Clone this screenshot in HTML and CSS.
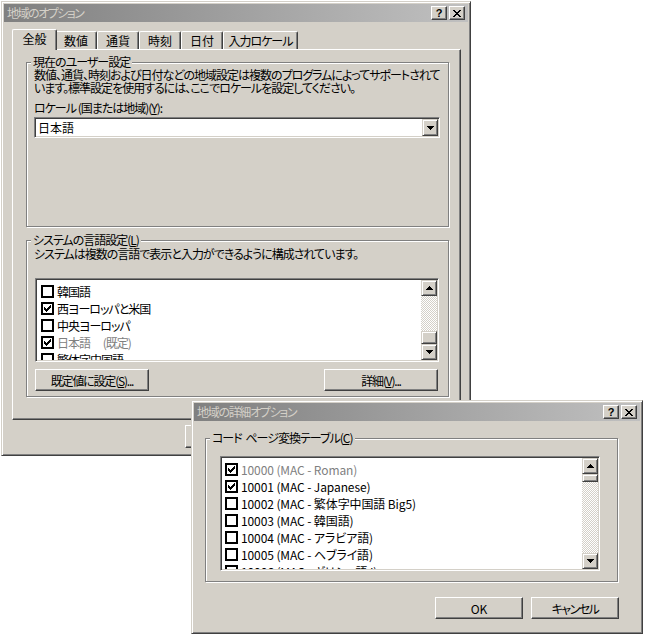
FILE: index.html
```html
<!DOCTYPE html>
<html lang="ja">
<head>
<meta charset="utf-8">
<title>地域のオプション</title>
<link rel="stylesheet" href="styles.css">
</head>
<body>
<div class="desktop">

  <div class="window win-main">
    <div class="titlebar">
      <span class="title">地域のオプション</span>
      <span class="tb-btn help">?</span>
      <span class="tb-btn close"><svg width="8" height="7" viewBox="0 0 8 7" shape-rendering="crispEdges"><path d="M0 0h2v1H0zM6 0h2v1H6zM1 1h2v1H1zM5 1h2v1H5zM2 2h4v1H2zM3 3h2v1H3zM2 4h4v1H2zM1 5h2v1H1zM5 5h2v1H5zM0 6h2v1H0zM6 6h2v1H6z"/></svg></span>
    </div>
    <div class="main-body">
      <div class="tabs">
        <div class="tab tab-first selected">全般</div>
        <div class="tab">数値</div>
        <div class="tab">通貨</div>
        <div class="tab">時刻</div>
        <div class="tab">日付</div>
        <div class="tab tab-wide">入力ロケール</div>
      </div>
      <div class="tabpanel">
        <div class="group group-user">
          <div class="group-label">現在のユーザー設定</div>
          <div class="desc">数値、通貨、時刻および日付などの地域設定は複数のプログラムによってサポートされて<br>います。標準設定を使用するには、ここでロケールを設定してください。</div>
          <div class="field-label">ロケール (国または地域)(<u>Y</u>):</div>
          <div class="combo">
            <span class="combo-text">日本語</span>
            <span class="sb-btn"><svg width="7" height="4" viewBox="0 0 7 4" shape-rendering="crispEdges"><path d="M0 0h7v1H0zM1 1h5v1H1zM2 2h3v1H2zM3 3h1v1H3z"/></svg></span>
          </div>
        </div>
        <div class="group group-lang">
          <div class="group-label">システムの言語設定(<u>L</u>)</div>
          <div class="desc desc2">システムは複数の言語で表示と入力ができるように構成されています。</div>
          <div class="listbox list-lang">
            <div class="list-items">
              <div class="item"><span class="check"></span><span>韓国語</span></div>
              <div class="item"><span class="check checked"><svg width="7" height="7" viewBox="0 0 7 7" shape-rendering="crispEdges"><path d="M6 0h1v1H6zM5 1h2v1H5zM0 2h1v1H0zM4 2h3v1H4zM0 3h2v1H0zM3 3h3v1H3zM0 4h5v1H0zM1 5h3v1H1zM2 6h1v1H2z"/></svg></span><span>西ヨーロッパと米国</span></div>
              <div class="item"><span class="check"></span><span>中央ヨーロッパ</span></div>
              <div class="item disabled"><span class="check checked"><svg width="7" height="7" viewBox="0 0 7 7" shape-rendering="crispEdges"><path d="M6 0h1v1H6zM5 1h2v1H5zM0 2h1v1H0zM4 2h3v1H4zM0 3h2v1H0zM3 3h3v1H3zM0 4h5v1H0zM1 5h3v1H1zM2 6h1v1H2z"/></svg></span><span>日本語　 (既定)</span></div>
              <div class="item"><span class="check"></span><span>繁体字中国語</span></div>
            </div>
            <div class="scrollbar">
              <span class="sb-btn"><svg width="7" height="4" viewBox="0 0 7 4" shape-rendering="crispEdges"><path d="M3 0h1v1H3zM2 1h3v1H2zM1 2h5v1H1zM0 3h7v1H0z"/></svg></span>
              <span class="sb-track"><span class="sb-thumb thumb-bottom"></span></span>
              <span class="sb-btn"><svg width="7" height="4" viewBox="0 0 7 4" shape-rendering="crispEdges"><path d="M0 0h7v1H0zM1 1h5v1H1zM2 2h3v1H2zM3 3h1v1H3z"/></svg></span>
            </div>
          </div>
          <div class="btn-row">
            <div class="btn btn-wide">既定値に設定(<u>S</u>)...</div>
            <div class="btn btn-wide">詳細(<u>V</u>)...</div>
          </div>
        </div>
      </div>
      <div class="dlg-buttons">
        <div class="btn btn-dlg"></div>
        <div class="btn btn-dlg"></div>
        <div class="btn btn-dlg"></div>
      </div>
    </div>
  </div>

  <div class="window win-adv">
    <div class="titlebar">
      <span class="title title-adv">地域の詳細オプション</span>
      <span class="tb-btn help">?</span>
      <span class="tb-btn close"><svg width="8" height="7" viewBox="0 0 8 7" shape-rendering="crispEdges"><path d="M0 0h2v1H0zM6 0h2v1H6zM1 1h2v1H1zM5 1h2v1H5zM2 2h4v1H2zM3 3h2v1H3zM2 4h4v1H2zM1 5h2v1H1zM5 5h2v1H5zM0 6h2v1H0zM6 6h2v1H6z"/></svg></span>
    </div>
    <div class="adv-body">
      <div class="group group-code">
        <div class="group-label">コード<span class="wide-space"> </span>ページ変換テーブル(<u>C</u>)</div>
        <div class="listbox list-code">
          <div class="list-items">
            <div class="item disabled"><span class="check checked"><svg width="7" height="7" viewBox="0 0 7 7" shape-rendering="crispEdges"><path d="M6 0h1v1H6zM5 1h2v1H5zM0 2h1v1H0zM4 2h3v1H4zM0 3h2v1H0zM3 3h3v1H3zM0 4h5v1H0zM1 5h3v1H1zM2 6h1v1H2z"/></svg></span><span>10000 (MAC - Roman)</span></div>
            <div class="item"><span class="check checked"><svg width="7" height="7" viewBox="0 0 7 7" shape-rendering="crispEdges"><path d="M6 0h1v1H6zM5 1h2v1H5zM0 2h1v1H0zM4 2h3v1H4zM0 3h2v1H0zM3 3h3v1H3zM0 4h5v1H0zM1 5h3v1H1zM2 6h1v1H2z"/></svg></span><span>10001 (MAC - Japanese)</span></div>
            <div class="item"><span class="check"></span><span>10002 (MAC - 繁体字中国語 Big5)</span></div>
            <div class="item"><span class="check"></span><span>10003 (MAC - 韓国語)</span></div>
            <div class="item"><span class="check"></span><span>10004 (MAC - アラビア語)</span></div>
            <div class="item"><span class="check"></span><span>10005 (MAC - ヘブライ語)</span></div>
            <div class="item"><span class="check"></span><span>10006 (MAC - ギリシャ語 I)</span></div>
          </div>
          <div class="scrollbar">
            <span class="sb-btn"><svg width="7" height="4" viewBox="0 0 7 4" shape-rendering="crispEdges"><path d="M3 0h1v1H3zM2 1h3v1H2zM1 2h5v1H1zM0 3h7v1H0z"/></svg></span>
            <span class="sb-track"><span class="sb-thumb thumb-top"></span></span>
            <span class="sb-btn"><svg width="7" height="4" viewBox="0 0 7 4" shape-rendering="crispEdges"><path d="M0 0h7v1H0zM1 1h5v1H1zM2 2h3v1H2zM3 3h1v1H3z"/></svg></span>
          </div>
        </div>
      </div>
      <div class="adv-buttons">
        <div class="btn btn-adv">OK</div>
        <div class="btn btn-adv btn-cancel">キャンセル</div>
      </div>
    </div>
  </div>

</div>
</body>
</html>
```
FILE: styles.css
```css
* { box-sizing: border-box; }
html, body { margin: 0; padding: 0; }
body {
  background: #fff;
  font-family: "Noto Sans CJK JP", "Noto Sans", sans-serif;
  font-size: 12px;
  line-height: 13px;
  letter-spacing: -1px;
  color: #000;
  font-feature-settings: "palt";
  width: 645px;
  height: 637px;
  overflow: hidden;
}
u { text-decoration: underline; text-underline-offset: 1px; }

.desktop { position: relative; width: 645px; height: 637px; }

.window {
  position: absolute;
  background: #d4d0c8;
  border: 1px solid;
  border-color: #d4d0c8 #404040 #404040 #d4d0c8;
  box-shadow: inset 1px 1px #fff, inset -1px -1px #808080;
  padding: 2px;
  display: flex;
  flex-direction: column;
}
.win-main { left: 1px; top: 1px; width: 470px; height: 455px; }
.win-adv { left: 191px; top: 400px; width: 452px; height: 234px; }

.titlebar {
  height: 18px;
  flex: none;
  background: linear-gradient(to right, #808080, #c0c0c0);
  display: flex;
  align-items: center;
  padding: 0 3px 0 3px;
  color: #d4d0c8;
  line-height: 18px;
}
.title { flex: 1; white-space: nowrap; letter-spacing: -1.5px; }
.title-adv { letter-spacing: -1.3px; }
.tb-btn {
  width: 16px;
  height: 14px;
  background: #d4d0c8;
  border: 1px solid;
  border-color: #fff #404040 #404040 #fff;
  box-shadow: inset -1px -1px #808080;
  display: flex;
  align-items: center;
  justify-content: center;
  color: #000;
  letter-spacing: 0;
}
.help {
  margin-right: 2px;
  font: bold 11px/12px "Liberation Sans", "DejaVu Sans", sans-serif;
  padding-bottom: 1px;
}
.close svg { display: block; fill: #000; }

/* main dialog */
.main-body {
  flex: 1;
  padding: 7px 7px 0 8px;
  display: flex;
  flex-direction: column;
}
.tabs {
  display: flex;
  align-items: flex-end;
  height: 20px;
  padding-left: 2px;
}
.tab {
  width: 42px;
  height: 18px;
  border: 1px solid #fff;
  border-bottom: 0;
  border-right-color: #404040;
  border-radius: 2px 2px 0 0;
  box-shadow: inset -1px 0 #808080;
  text-align: center;
  line-height: 17px;
  white-space: nowrap;
  background: #d4d0c8;
  letter-spacing: 0;
}
.tab-first { width: 41px; }
.tab-wide { width: 75px; letter-spacing: -1px; }
.tab.selected {
  position: relative;
  z-index: 1;
  width: 45px;
  height: 21px;
  margin: 0 -2px -1px;
  padding-bottom: 3px;
}

.tabpanel {
  height: 371px;
  border: 1px solid;
  border-color: #fff #404040 #404040 #fff;
  box-shadow: inset -1px -1px #808080;
  padding: 12px 0 0 13px;
}

.group {
  border: 1px solid #808080;
  box-shadow: inset 1px 1px #fff, 1px 1px #fff;
}
.group-label {
  width: fit-content;
  margin: -7px 0 0 4px;
  padding: 0 2px;
  background: #d4d0c8;
  line-height: 12px;
  white-space: nowrap;
}
.wide-space { letter-spacing: 1px; }
.group-user { width: 423px; height: 165px; }
.group-lang { width: 423px; height: 157px; margin-top: 13px; }

.desc { padding-left: 7px; white-space: nowrap; }
.desc2 { margin-top: 1px; }
.field-label { margin-top: 7px; padding-left: 7px; white-space: nowrap; }

.combo {
  margin: 3px 0 0 7px;
  width: 406px;
  height: 21px;
  background: #fff;
  border: 1px solid;
  border-color: #808080 #fff #fff #808080;
  box-shadow: inset 1px 1px #404040, inset -1px -1px #d4d0c8;
  padding: 1px;
  display: flex;
}
.combo-text { flex: 1; line-height: 17px; padding-left: 2px; letter-spacing: 0; }
.combo .sb-btn { height: 17px; }

.listbox {
  background: #fff;
  border: 1px solid;
  border-color: #808080 #fff #fff #808080;
  box-shadow: inset 1px 1px #404040, inset -1px -1px #d4d0c8;
  padding: 1px;
  display: flex;
}
.list-lang { margin: 18px 0 0 8px; width: 404px; height: 84px; }
.list-code { margin: 12px 0 0 14px; width: 380px; height: 115px; letter-spacing: -0.1px; }

.list-items { flex: 1; overflow: hidden; padding: 3px 0 0 4px; }
.list-code .list-items { padding-left: 3px; }
.item {
  display: flex;
  align-items: center;
  gap: 3px;
  height: 17px;
  white-space: nowrap;
}
.item.disabled { color: #808080; }
.check {
  flex: none;
  width: 13px;
  height: 13px;
  border: 2px solid #000;
  background: #fff;
  display: flex;
  align-items: center;
  justify-content: center;
}
.check svg { display: block; fill: #000; }

.scrollbar {
  width: 16px;
  flex: none;
  display: flex;
  flex-direction: column;
  background: repeating-conic-gradient(#d4d0c8 0 25%, #fff 0 50%) 0 0 / 2px 2px;
}
.sb-btn {
  width: 16px;
  height: 16px;
  flex: none;
  background: #d4d0c8;
  border: 1px solid;
  border-color: #d4d0c8 #404040 #404040 #d4d0c8;
  box-shadow: inset 1px 1px #fff, inset -1px -1px #808080;
  display: flex;
  align-items: center;
  justify-content: center;
}
.sb-btn svg { display: block; fill: #000; }
.sb-track { flex: 1; display: flex; flex-direction: column; }
.sb-thumb {
  height: 13px;
  background: #d4d0c8;
  border: 1px solid;
  border-color: #d4d0c8 #404040 #404040 #d4d0c8;
  box-shadow: inset 1px 1px #fff, inset -1px -1px #808080;
}
.thumb-bottom { margin-top: auto; }
.thumb-top { height: 8px; }

.btn {
  height: 22px;
  background: #d4d0c8;
  border: 1px solid;
  border-color: #fff #404040 #404040 #fff;
  box-shadow: inset -1px -1px #808080;
  display: flex;
  align-items: center;
  justify-content: center;
  white-space: nowrap;
}
.btn-row {
  display: flex;
  justify-content: space-between;
  width: 403px;
  margin: 7px 0 0 8px;
}
.btn-wide { width: 114px; letter-spacing: -1.2px; }

.dlg-buttons {
  display: flex;
  justify-content: flex-end;
  gap: 6px;
  margin-top: 5px;
}
.btn-dlg { width: 88px; height: 23px; }

/* advanced dialog */
.adv-body {
  flex: 1;
  padding: 17px 0 0 11px;
  display: flex;
  flex-direction: column;
}
.group-code { width: 413px; height: 144px; }
.adv-buttons {
  display: flex;
  justify-content: flex-end;
  gap: 8px;
  margin-top: 15px;
  padding-right: 21px;
}
.btn-adv { width: 88px; letter-spacing: 0; }
.btn-cancel { letter-spacing: -1.5px; }
```
